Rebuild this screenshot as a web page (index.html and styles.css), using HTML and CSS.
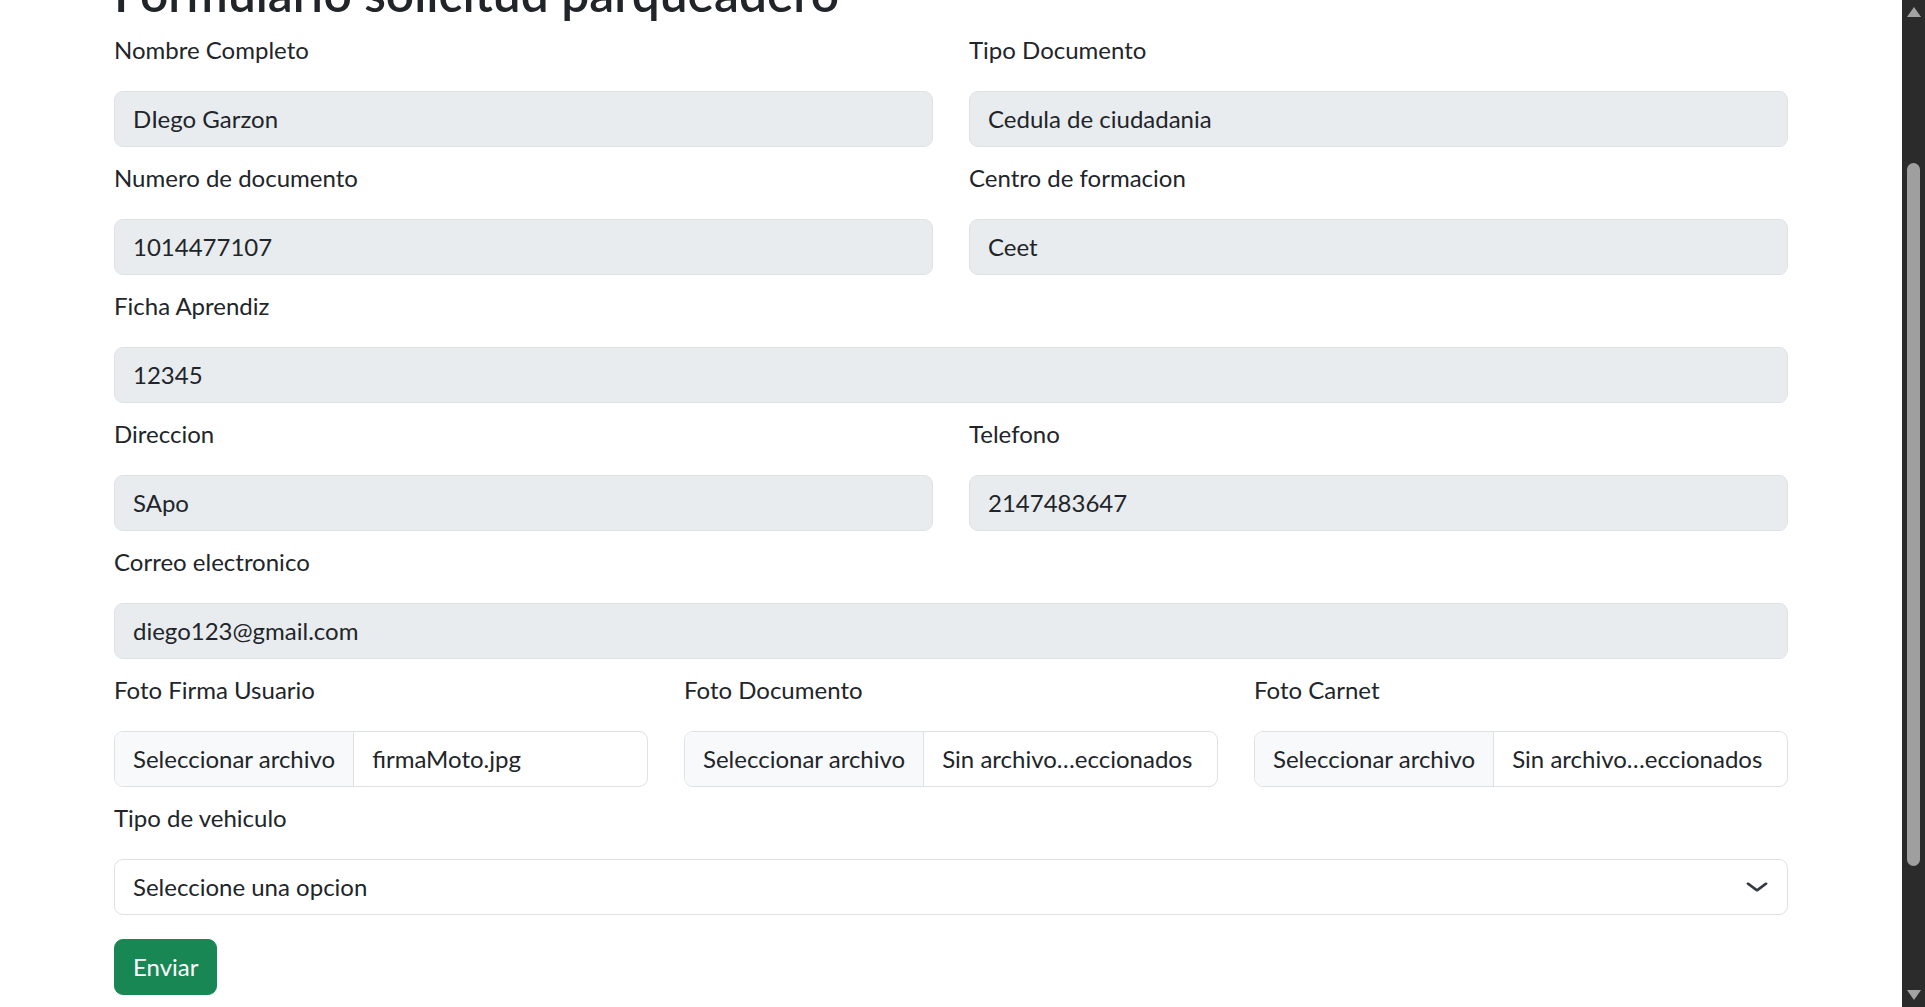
FILE: index.html
```html
<!DOCTYPE html>
<html lang="es">
<head>
<meta charset="utf-8">
<title>Formulario solicitud parqueadero</title>
<link rel="stylesheet" href="styles.css">
</head>
<body>
<div class="scrollbar" aria-hidden="true">
  <span class="sb-up"></span>
  <span class="sb-thumb"></span>
  <span class="sb-down"></span>
</div>
<main class="page">
  <div class="container">
    <h1 class="title">Formulario solicitud parqueadero</h1>
    <form class="form">
      <div class="grid grid-2">
        <div class="field">
          <label class="label">Nombre Completo</label>
          <div class="control readonly">DIego Garzon</div>
        </div>
        <div class="field">
          <label class="label">Tipo Documento</label>
          <div class="control readonly">Cedula de ciudadania</div>
        </div>
        <div class="field">
          <label class="label">Numero de documento</label>
          <div class="control readonly">1014477107</div>
        </div>
        <div class="field">
          <label class="label">Centro de formacion</label>
          <div class="control readonly">Ceet</div>
        </div>
      </div>
      <div class="field">
        <label class="label">Ficha Aprendiz</label>
        <div class="control readonly">12345</div>
      </div>
      <div class="grid grid-2">
        <div class="field">
          <label class="label">Direccion</label>
          <div class="control readonly">SApo</div>
        </div>
        <div class="field">
          <label class="label">Telefono</label>
          <div class="control readonly">2147483647</div>
        </div>
      </div>
      <div class="field">
        <label class="label">Correo electronico</label>
        <div class="control readonly">diego123@gmail.com</div>
      </div>
      <div class="grid grid-3">
        <div class="field">
          <label class="label">Foto Firma Usuario</label>
          <div class="control file"><span class="file-btn">Seleccionar archivo</span><span class="file-name">firmaMoto.jpg</span></div>
        </div>
        <div class="field">
          <label class="label">Foto Documento</label>
          <div class="control file"><span class="file-btn">Seleccionar archivo</span><span class="file-name">Sin archivo…eccionados</span></div>
        </div>
        <div class="field">
          <label class="label">Foto Carnet</label>
          <div class="control file"><span class="file-btn">Seleccionar archivo</span><span class="file-name">Sin archivo…eccionados</span></div>
        </div>
      </div>
      <div class="field">
        <label class="label">Tipo de vehiculo</label>
        <div class="control select">
          <span>Seleccione una opcion</span>
          <svg class="chevron" width="24" height="18" viewBox="0 0 16 16" preserveAspectRatio="none"><path d="m2 5 6 6 6-6" fill="none" stroke="#343a40" stroke-width="2" stroke-linecap="round" stroke-linejoin="round"/></svg>
        </div>
      </div>
      <div class="actions">
        <button type="button" class="btn">Enviar</button>
      </div>
    </form>
  </div>
</main>
</body>
</html>
```
FILE: styles.css
```css
html, body {
  margin: 0;
  padding: 0;
  overflow: hidden;
  background: #fff;
}
body {
  font-family: Lato, "Noto Sans", sans-serif;
  font-size: 24px;
  line-height: 36px;
  color: #212529;
}
.page {
  margin-right: 23px;
}
.container {
  box-sizing: border-box;
  max-width: 1710px;
  margin: 0 auto;
  padding: 0 18px;
}
.title {
  font-size: 49.7px;
  font-weight: 600;
  line-height: 59px;
  margin: -36px 0 9px;
  white-space: nowrap;
}
.grid {
  display: grid;
  column-gap: 36px;
}
.grid-2 { grid-template-columns: 1fr 1fr; }
.grid-3 { grid-template-columns: repeat(3, 1fr); }
.field {
  margin-bottom: 13px;
  min-width: 0;
}
.label {
  display: block;
  margin-bottom: 23px;
}
.control {
  box-sizing: border-box;
  height: 56px;
  padding: 9px 18px;
  border: 1px solid #dee2e6;
  border-radius: 9px;
  background: #fff;
  white-space: nowrap;
  overflow: hidden;
}
.readonly { background: #e9ecef; }
.file {
  display: flex;
  padding: 0;
}
.file-btn {
  padding: 9px 18px;
  background: #f8f9fa;
  border-right: 1px solid #dee2e6;
}
.file-name {
  padding: 9px 18px;
  overflow: hidden;
}
.select {
  display: flex;
  align-items: center;
}
.chevron {
  margin-left: auto;
  flex: none;
}
.actions {
  display: flex;
  margin-top: 24px;
}
.btn {
  box-sizing: border-box;
  height: 56px;
  padding: 9px 18px;
  font: inherit;
  color: #fff;
  background: #198754;
  border: 1px solid #198754;
  border-radius: 9px;
}
.scrollbar {
  position: fixed;
  top: 0;
  right: 0;
  width: 23px;
  height: 100%;
  background: #2b2b2b;
}
.sb-up, .sb-down, .sb-thumb {
  position: absolute;
  left: 5px;
}
.sb-up {
  top: 7px;
  width: 0;
  height: 0;
  border-left: 7px solid transparent;
  border-right: 7px solid transparent;
  border-bottom: 10px solid #a3a3a3;
}
.sb-down {
  bottom: 7px;
  width: 0;
  height: 0;
  border-left: 7px solid transparent;
  border-right: 7px solid transparent;
  border-top: 10px solid #a3a3a3;
}
.sb-thumb {
  top: 163px;
  width: 13px;
  height: 703px;
  border-radius: 7px;
  background: #9f9f9f;
}
```
